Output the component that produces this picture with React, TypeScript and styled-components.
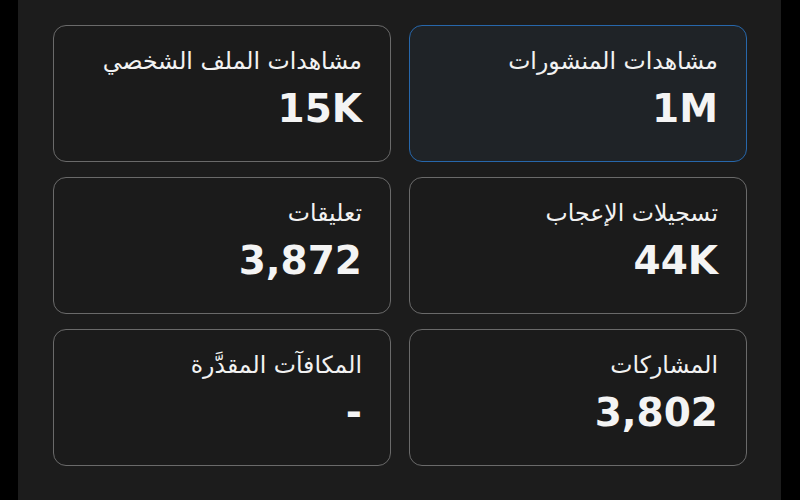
import React from 'react';
import styled, { createGlobalStyle } from 'styled-components';

const GlobalStyle = createGlobalStyle`
  html, body {
    margin: 0;
    padding: 0;
    background: #000;
  }
  * {
    box-sizing: border-box;
  }
`;

const Screen = styled('main')`
  width: 763px;
  height: 500px;
  margin-left: 18px;
  background: #1c1c1c;
  padding: 25px 34px 34px 35px;
`;

const StatsGrid = styled('section')`
  direction: rtl;
  display: grid;
  grid-template-columns: repeat(2, 338px);
  grid-auto-rows: 137px;
  column-gap: 18px;
  row-gap: 15px;
`;

const StatCard = styled('article')<{ $active?: boolean }>`
  display: flex;
  flex-direction: column;
  align-items: flex-start;
  padding: 18px 28px 0;
  border-radius: 13px;
  border: 1.5px solid ${({ $active }) => ($active ? '#2767ab' : '#6a6a6a')};
  background: ${({ $active }) => ($active ? '#1f2327' : '#1b1b1b')};
`;

const StatLabel = styled('h3')`
  margin: 0;
  font-family: 'DejaVu Sans', sans-serif;
  font-weight: normal;
  font-size: 23.6px;
  line-height: 34px;
  color: #f2f2f2;
`;

const StatValue = styled('div')`
  direction: ltr;
  margin-top: 9px;
  font-family: 'DejaVu Sans', sans-serif;
  font-weight: bold;
  font-size: 39px;
  line-height: 44px;
  color: #f4f4f4;
`;

type Stat = {
  label: string;
  value: string;
  active?: boolean;
};

const stats: Stat[] = [
  { label: 'مشاهدات المنشورات', value: '1M', active: true },
  { label: 'مشاهدات الملف الشخصي', value: '15K' },
  { label: 'تسجيلات الإعجاب', value: '44K' },
  { label: 'تعليقات', value: '3,872' },
  { label: 'المشاركات', value: '3,802' },
  { label: 'المكافآت المقدَّرة', value: '-' },
];

export default function App() {
  return (
    <>
      <GlobalStyle />
      <Screen>
        <StatsGrid>
          {stats.map((stat) => (
            <StatCard key={stat.label} $active={stat.active}>
              <StatLabel>{stat.label}</StatLabel>
              <StatValue>{stat.value}</StatValue>
            </StatCard>
          ))}
        </StatsGrid>
      </Screen>
    </>
  );
}
